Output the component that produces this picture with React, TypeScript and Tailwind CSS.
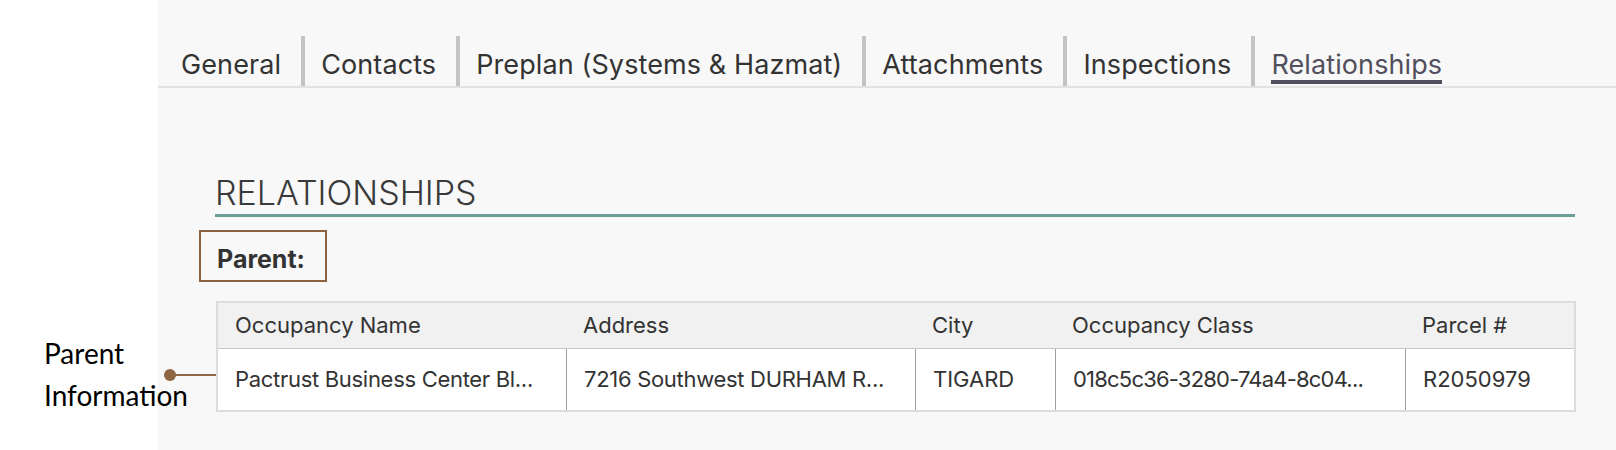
import React from "react";

const tabs = [
  "General",
  "Contacts",
  "Preplan (Systems & Hazmat)",
  "Attachments",
  "Inspections",
  "Relationships",
];

const columns = [
  "Occupancy Name",
  "Address",
  "City",
  "Occupancy Class",
  "Parcel #",
];

const row = [
  { v: "Pactrust Business Center Bl...", t: "tracking-[-0.3px]" },
  { v: "7216 Southwest DURHAM R...", t: "tracking-[-0.3px]" },
  { v: "TIGARD", t: "" },
  { v: "018c5c36-3280-74a4-8c04...", t: "tracking-[-0.8px]" },
  { v: "R2050979", t: "" },
];

const TabBar: React.FC = () => {
  return (
    <div className="flex h-[50px] mt-[36px] border-b-2 border-[#e2e2e2] box-content">
      {tabs.map((t, i) => {
        const active = t === "Relationships";
        return (
          <div
            key={t}
            className={
              i === 0
                ? "flex items-end pb-[2px] pl-[23px] pr-[20px]"
                : "flex items-end pb-[2px] pl-[16px] pr-[20px] border-l-4 border-[#c4c4c4]"
            }
          >
            <span
              className={
                active
                  ? "text-[27px] tracking-[0.1px] leading-[30px] text-[#52505e] border-b-4 border-[#4f4e5c] whitespace-nowrap"
                  : "text-[27px] tracking-[0.1px] leading-[30px] text-[#333] border-b-4 border-transparent whitespace-nowrap"
              }
            >
              {t}
            </span>
          </div>
        );
      })}
    </div>
  );
};

const ParentTable: React.FC = () => {
  return (
    <div className="ml-[1px] mt-[19px] w-[1360px] border-2 border-[#dcdcdc] bg-white text-[22px] text-[#333]">
      <div className="grid grid-cols-[348px_349px_140px_350px_169px] bg-[#f1f1f1] border-b border-[#c9c9c9]">
        {columns.map((c) => (
          <div key={c} className="h-[45px] flex items-center px-[17px] whitespace-nowrap">
            {c}
          </div>
        ))}
      </div>
      <div className="grid grid-cols-[348px_349px_140px_350px_169px]">
        {row.map((c, i) => (
          <div
            key={i}
            className={
              i === 0
                ? "h-[61px] flex items-center px-[17px] whitespace-nowrap overflow-hidden"
                : "h-[61px] flex items-center px-[17px] whitespace-nowrap overflow-hidden border-l border-[#9e9e9e]"
            }
          >
            <span className={c.t}>{c.v}</span>
          </div>
        ))}
      </div>
    </div>
  );
};

export default function App() {
  return (
    <div
      className="relative flex w-[1616px] h-[450px] bg-white"
      style={{ fontFamily: "Inter, 'Liberation Sans', sans-serif" }}
    >
      <div className="w-[158px] shrink-0 bg-white" />
      <div className="flex-1 bg-[#f8f8f8]">
        <TabBar />
        <div className="pl-[57px]">
          <h2 className="mt-[85px] w-[1360px] pb-[1px] border-b-[3px] border-[#6a9e96] text-[34px] leading-[40px] font-light text-[#3a3a3a]">
            RELATIONSHIPS
          </h2>
          <div className="mt-[13px] -ml-[16px] w-[128px] border-2 border-[#8b6140] pl-[16px] pt-[12px] pb-[6px]">
            <span className="text-[25px] leading-[30px] font-bold text-[#333]">Parent:</span>
          </div>
          <ParentTable />
        </div>
      </div>

      {/* annotation */}
      <div
        className="absolute left-[44px] top-[332px] text-[28px] leading-[42px] text-black"
        style={{ fontFamily: "Lato, 'Open Sans', sans-serif" }}
      >
        <div>Parent</div>
        <div>Information</div>
      </div>
      <div className="absolute left-[164px] top-[369px] w-[12px] h-[12px] rounded-full bg-[#8f6644]" />
      <div className="absolute left-[170px] top-[374px] w-[46px] h-[2px] bg-[#8f6644]" />
    </div>
  );
}
